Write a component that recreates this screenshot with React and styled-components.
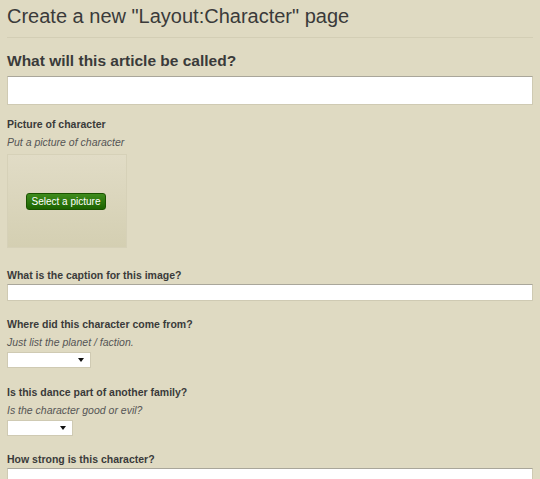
import React from "react";
import styled, { createGlobalStyle } from "styled-components";

const Global = createGlobalStyle`
  html, body { margin: 0; background: #dfdac2; }
  body { font-family: "Liberation Sans", Arial, sans-serif; color: #3a3a3a; }
`;
const Page = styled.div`padding: 0 7px; display: flex; flex-direction: column;`;
const Title = styled.h1`
  margin: 0; padding-top: 3px; font-size: 20px; font-weight: normal; line-height: 26px;
  padding-bottom: 8px; border-bottom: 1px solid #d3ceb5;
`;
const BigLabel = styled.h2`margin: 13px 0 2px; font-size: 15.5px; font-weight: bold; line-height: 20px;`;
const Label = styled.div`font-size: 10.5px; font-weight: bold; line-height: 14px; margin-top: ${p => p.$mt}px;`;
const Hint = styled.div`font-size: 10.5px; font-style: italic; color: #555; line-height: 14px; margin-top: 4px;`;
const Input = styled.div`
  height: ${p => p.$h}px; background: #fff; border: 1px solid #cfcab3; border-top-color: #a9a69a;
  box-sizing: border-box; margin-top: ${p => p.$mt || 3}px;
`;
const Select = styled.div`
  width: ${p => p.$w}px; height: 16px; background: #fff; border: 1px solid #cfcab3; box-sizing: border-box;
  margin-top: 3px; display: flex; align-items: center; justify-content: flex-end; padding-right: 6px;
  &::after { content: ""; border-left: 3px solid transparent; border-right: 3px solid transparent; border-top: 4px solid #111; }
`;
const PicBox = styled.div`
  width: 120px; height: 94px; margin-top: 5px; box-sizing: border-box; border: 1px solid #d6d1b8;
  background: linear-gradient(#e1dcc6, #d4cfb2); display: flex; align-items: center; justify-content: center;
`;
const Btn = styled.button`
  font-family: inherit; font-size: 10px; color: #fff; background: linear-gradient(#3f8c1d, #1c6300);
  border: 1px solid #1a5200; border-radius: 3px; padding: 0 5px; height: 17px; margin-right: 2px; cursor: pointer;
`;

export default function App() {
  return (
    <Page>
      <Global />
      <Title>Create a new "Layout:Character" page</Title>
      <BigLabel>What will this article be called?</BigLabel>
      <Input $h={29} />
      <Label $mt={12}>Picture of character</Label>
      <Hint>Put a picture of character</Hint>
      <PicBox><Btn>Select a picture</Btn></PicBox>
      <Label $mt={20}>What is the caption for this image?</Label>
      <Input $h={17} $mt={2} />
      <Label $mt={16}>Where did this character come from?</Label>
      <Hint>Just list the planet / faction.</Hint>
      <Select $w={84} />
      <Label $mt={17}>Is this dance part of another family?</Label>
      <Hint>Is the character good or evil?</Hint>
      <Select $w={66} />
      <Label $mt={16}>How strong is this character?</Label>
      <Input $h={17} $mt={2} />
    </Page>
  );
}
